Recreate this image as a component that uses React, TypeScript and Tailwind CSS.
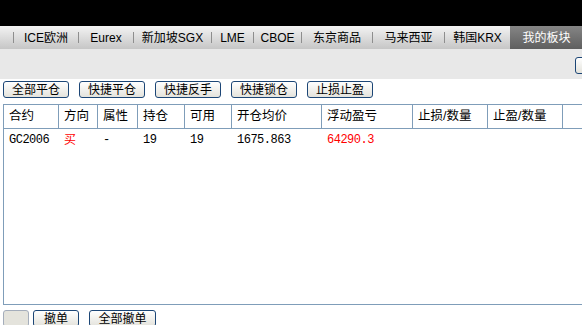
const tabs = [
  { label: "ICE欧洲", cls: "w-[64px]" },
  { label: "Eurex", cls: "w-[54px]" },
  { label: "新加坡SGX", cls: "w-[77px]" },
  { label: "LME", cls: "w-[41px]" },
  { label: "CBOE", cls: "w-[47px]" },
  { label: "东京商品", cls: "w-[70px]" },
  { label: "马来西亚", cls: "w-[71px]" },
  { label: "韩国KRX", cls: "w-[65px]" },
];

const cols = [
  { label: "合约", cls: "w-[55px]" },
  { label: "方向", cls: "w-[39px]" },
  { label: "属性", cls: "w-[40px]" },
  { label: "持仓", cls: "w-[47px]" },
  { label: "可用", cls: "w-[47px]" },
  { label: "开仓均价", cls: "w-[90px]" },
  { label: "浮动盈亏", cls: "w-[91px]" },
  { label: "止损/数量", cls: "w-[75px]" },
  { label: "止盈/数量", cls: "w-[75px]" },
];

const row = [
  { v: "GC2006", red: false, mono: true },
  { v: "买", red: true, mono: false },
  { v: "-", red: false, mono: true },
  { v: "19", red: false, mono: true },
  { v: "19", red: false, mono: true },
  { v: "1675.863", red: false, mono: true },
  { v: "64290.3", red: true, mono: true },
  { v: "", red: false, mono: true },
  { v: "", red: false, mono: true },
];

function Btn({ children, cls }: { children?: React.ReactNode; cls: string }) {
  return (
    <div
      className={`${cls} h-[17px] shrink-0 rounded-[3px] border border-[#1c4676] bg-gradient-to-b from-white to-[#e4e3dc] flex items-center justify-center text-[12px] leading-none text-black`}
    >
      {children}
    </div>
  );
}

export default function App() {
  return (
    <div className="w-[582px] h-[325px] overflow-hidden bg-white font-['Liberation_Sans','Noto_Sans_CJK_SC',sans-serif] text-[12px] text-black">
      <div className="h-[26px] bg-black" />
      <div className="h-[23px] flex items-center bg-gradient-to-b from-[#f3f3f3] to-[#c6c6c6]">
        <div className="w-[13px] shrink-0" />
        {tabs.map((t) => (
          <div key={t.label} className="flex items-center shrink-0">
            <div className="w-px h-[11px] bg-[#8e8e8e]" />
            <div className={`${t.cls} text-center leading-none`}>{t.label}</div>
          </div>
        ))}
        <div className="flex-1 h-full flex items-center justify-center bg-gradient-to-b from-[#858585] to-[#5f5f5f] text-white leading-none pl-[1px]">
          我的板块
        </div>
      </div>
      <div className="h-[30px] bg-[#e8e8e8] flex items-start pt-[8px] pl-[575px] overflow-hidden">
        <Btn cls="w-[40px]" />
      </div>
      <div className="pt-[2px]">
        <div className="flex gap-[10px] pl-[3px]">
          <Btn cls="w-[66px]">全部平仓</Btn>
          <Btn cls="w-[66px]">快捷平仓</Btn>
          <Btn cls="w-[66px]">快捷反手</Btn>
          <Btn cls="w-[66px]">快捷锁仓</Btn>
          <Btn cls="w-[66px]">止损止盈</Btn>
        </div>
        <div className="ml-[3px] mt-[6px] h-[201px] w-[640px] border border-[#7f9db9]">
          <div className="flex h-[24px] border-b border-[#7f9db9]">
            {cols.map((c) => (
              <div
                key={c.label}
                className={`${c.cls} shrink-0 border-r border-[#7f9db9] flex items-center pl-[5px] leading-none text-[12.5px]`}
              >
                {c.label}
              </div>
            ))}
            <div className="flex-1" />
          </div>
          <div className="flex h-[21px] items-center">
            {row.map((c, i) => (
              <div
                key={i}
                className={`${cols[i].cls} shrink-0 pl-[5px] leading-none ${c.red ? "text-[#ff0000]" : "text-black"} ${c.mono ? "font-['Liberation_Mono',monospace] text-[12px] tracking-[-0.5px]" : "text-[12px]"}`}
              >
                {c.v}
              </div>
            ))}
          </div>
        </div>
        <div className="flex pl-[3px] mt-[5px]">
          <div className="w-[26px] h-[17px] rounded-[3px] border border-[#a4adbb] bg-[#e4e3dc]" />
          <Btn cls="w-[46px] ml-[4px]">撤单</Btn>
          <Btn cls="w-[67px] ml-[10px]">全部撤单</Btn>
        </div>
      </div>
    </div>
  );
}
